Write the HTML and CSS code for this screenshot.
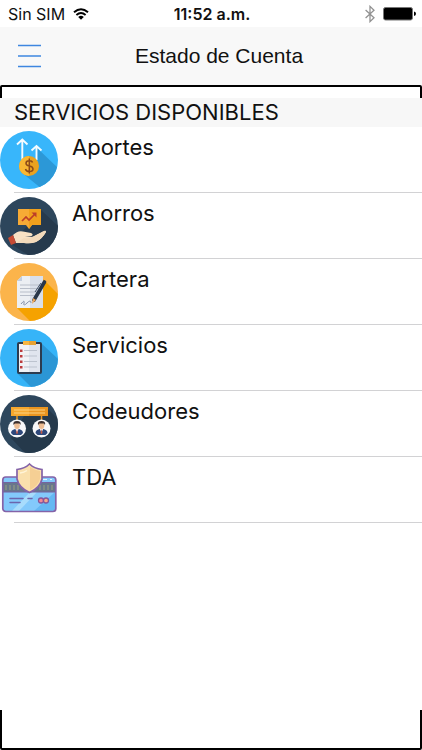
FILE: index.html
```html
<!DOCTYPE html>
<html lang="es">
<head>
<meta charset="utf-8">
<meta name="viewport" content="width=device-width, initial-scale=1">
<title>Estado de Cuenta</title>
<link rel="stylesheet" href="styles.css">
</head>
<body>
<div class="status">
  <div class="status-side">
    <span>Sin SIM</span>
    <svg class="wifi" viewBox="0 0 16 12" aria-hidden="true">
      <path d="M1 4.2Q8-1.8 15 4.2" fill="none" stroke="#000" stroke-width="2"/>
      <path d="M3.4 7Q8 3.2 12.6 7" fill="none" stroke="#000" stroke-width="1.9"/>
      <path d="M5.2 8.9Q8 6.6 10.8 8.9L8 11.8Z"/>
    </svg>
  </div>
  <span class="clock">11:52 a.m.</span>
  <div class="status-side status-right">
    <svg class="bluetooth" viewBox="0 0 10 18" aria-hidden="true"><path d="M.6 5L9 12.8L5 16.6V1.4L9 5.2L.6 13" fill="none" stroke="#929292" stroke-width="1.3"/></svg>
    <svg class="battery" viewBox="0 0 33 14" aria-hidden="true"><rect x=".5" y=".5" width="29" height="12.5" rx="2" fill="#000" stroke="#777"/><path d="M31 4.5q2 .5 2 2.3t-2 2.3z"/></svg>
  </div>
</div>
<header class="nav">
  <button class="menu" type="button" aria-label="Menú">
    <svg viewBox="0 0 23 24" aria-hidden="true"><path d="M0 1.5H23M0 12H23M0 22.5H23" stroke="#3e86e0" stroke-width="1.6"/></svg>
  </button>
  <h1>Estado de Cuenta</h1>
</header>
<main class="frame">
  <section class="sheet">
    <h2>SERVICIOS DISPONIBLES</h2>
    <ul>
      <li>
        <svg class="icon" viewBox="0 0 58 58" aria-hidden="true">
          <defs><clipPath id="disc"><circle cx="29" cy="29" r="29"/></clipPath></defs>
          <g clip-path="url(#disc)">
            <path fill="#38b6fb" d="M0 0H58V58H0Z"/>
            <path fill="#2c98d7" d="M36 16L58 37V58H42L21 41L38 34Z"/>
            <path d="M22.300 29V9M17 13.500L22.300 8.500L27.500 13.500M36.500 29V16M31.500 19.500L36.500 15L41.500 19.500" fill="none" stroke="#f4fbff" stroke-width="1.900"/>
            <circle cx="29" cy="35" r="10" fill="#eaa21f"/>
            <path d="M29 25a10 10 0 0 0 0 20z" fill="#f9b733"/>
            <path d="M32.500 31.500Q32 29.700 29.300 29.700Q26 29.700 26 32.200Q26 34.300 29.300 35Q33 35.700 33 38Q33 40.500 29.300 40.500Q26 40.500 25.500 38M29.300 27.500V42.500" fill="none" stroke="#8e4b18" stroke-width="1.500"/>
          </g>
        </svg>
        <a href="#aportes">Aportes</a>
      </li>
      <li>
        <svg class="icon" viewBox="0 0 58 58" aria-hidden="true">
          <g clip-path="url(#disc)">
            <path fill="#2d465c" d="M0 0H58V58H0Z"/>
            <path fill="#263a4d" d="M41 13L58 29V58H28L11 47L29 27Z"/>
            <path fill="#f7aa35" d="M18 12H41V28H32L29 32L26 28H18Z"/>
            <path fill="#f0a01c" d="M29 12H41V28H32L29 32Z"/>
            <path d="M22 24L26 20L29 23L35 17" fill="none" stroke="#bd3e28" stroke-width="1.700"/>
            <path d="M31.500 15.500H36.500V20.500Z" fill="#bd3e28"/>
            <path d="M13 38Q18 33 23 34.500L31 36Q34 37.500 31.500 39H25L33 40L43 34.500Q46 33 46 35Q42 42 36 45Q31 47 24 46H16Z" fill="#f8e1c4"/>
            <path d="M24 41Q29 42 34 39L43 34.500Q46 33 46 35Q42 42 36 45Q30 47 24 46H16Z" fill="#f3dabb"/>
            <path d="M8 41L13 38L16 46L11 48Z" fill="#c74b34"/>
          </g>
        </svg>
        <a href="#ahorros">Ahorros</a>
      </li>
      <li>
        <svg class="icon" viewBox="0 0 58 58" aria-hidden="true">
          <g clip-path="url(#disc)">
            <path fill="#fbb44b" d="M0 0H58V58H0Z"/>
            <path fill="#f5a200" d="M42 15L58 31V58H30L17 45L39 42Z"/>
            <path fill="#eceff3" d="M22 13H43V45H17V18Z"/>
            <path fill="#d9dfea" d="M30 13H43V45H30Z"/>
            <path fill="#c3cddd" d="M22 13V18H17Z"/>
            <path d="M20 22H40M20 25.500H40M20 29H38M20 32.500H35" stroke="#b8bec9" stroke-width="1"/>
            <path d="M21 41Q25 36 24 40T27 40T31 40" fill="none" stroke="#8793ab" stroke-width="1"/>
            <path d="M44.500 19L34 37" stroke="#28364a" stroke-width="3.600" stroke-linecap="round"/>
            <path d="M33 35L36 37L32 41Z" fill="#eba455"/>
            <path d="M35 29L41 20" stroke="#3b4b62" stroke-width="1"/>
          </g>
        </svg>
        <a href="#cartera">Cartera</a>
      </li>
      <li>
        <svg class="icon" viewBox="0 0 58 58" aria-hidden="true">
          <g clip-path="url(#disc)">
            <path fill="#36b4f8" d="M0 0H58V58H0Z"/>
            <path fill="#2b96d5" d="M41 14L58 30V58H31L17 44Z"/>
            <rect x="17" y="13" width="25" height="32" rx="2" fill="#2c3b4f"/>
            <path fill="#f0f2f6" d="M19 15H40V43H19Z"/>
            <path fill="#e0e5ee" d="M29 15H40V43H29Z"/>
            <path d="M24 21.500H37M24 27H37M24 32.500H37M24 38H37" stroke="#bcc3ce" stroke-width="1"/>
            <path d="M20 20.500h2.500v2.500H20zM20 26h2.500v2.500H20zM20 31.500h2.500v2.500H20zM20 37h2.500v2.500H20z" fill="#bb3b3d"/>
            <path fill="#f6b643" d="M23 12H36V16H23Z"/><path fill="#e8a333" d="M29 12H36V16H29Z"/>
          </g>
        </svg>
        <a href="#servicios">Servicios</a>
      </li>
      <li>
        <svg class="icon" viewBox="0 0 58 58" aria-hidden="true">
          <g clip-path="url(#disc)">
            <path fill="#2e475d" d="M0 0H58V58H0Z"/>
            <path fill="#25394b" d="M47 13L58 24V58H25L11 43L24 21H47Z"/>
            <path d="M17 21V25M41.500 21V25" stroke="#eb9a24" stroke-width="1.500"/>
            <path fill="#f6a72d" d="M11 12H48V21H11Z"/><path fill="#e9941f" d="M29 12H48V21H29Z"/>
            <path d="M14 15H45M14 18H45" stroke="#fbd283" stroke-width="1"/>
            <g id="person">
              <circle cx="17" cy="33.500" r="9" fill="#f7f8fa"/>
              <path d="M11 38Q11 35 15 34H19Q23 35 23 38L21 40H13Z" fill="#2e487b"/>
              <path d="M15 33H19L17 38Z" fill="#fff"/>
              <ellipse cx="17" cy="30.500" rx="2.800" ry="3.600" fill="#edbd94"/>
              <path d="M13.500 30Q12.500 26 17 26T20.500 30L19.500 28.500H15Z" fill="#3c302f"/>
              <path d="M17 34L18 38L17 39L16 38Z" fill="#c65b4a"/>
            </g>
            <use href="#person" x="24.500"/>
          </g>
        </svg>
        <a href="#codeudores">Codeudores</a>
      </li>
      <li>
        <svg class="icon" viewBox="0 0 58 58" aria-hidden="true">
          <rect x="2.800" y="16" width="53" height="34.500" rx="3" fill="#83c9fb"/>
          <path fill="#65b8f3" d="M34 50L55 31V47Q55 50 51 50Z"/>
          <path fill="#a8dcfc" d="M12 50L30 31H37L19 50Z"/>
          <path fill="#68768c" d="M3 21.500H55V31H3Z"/>
          <path d="M6 24v5M10 24v5M14 24v5M18 24v5M40 24v5M44 24v5M48 24v5M52 24v5" stroke="#929b83" stroke-width="1.200"/>
          <rect x="2.800" y="16" width="53" height="34.500" rx="3" fill="none" stroke="#8463a8" stroke-width="1.700"/>
          <path d="M3 21.500H55M3 31H55" stroke="#7563a0" stroke-width="1"/>
          <path d="M10 37.500H23M28 37.500H32M10 41.500H20" stroke="#6b65ad" stroke-width="1.500" stroke-linecap="round"/>
          <path d="M43 18.500H47M50 18.500H52" stroke="#e4f6ff" stroke-width="1.200"/>
          <circle cx="41" cy="39.500" r="2.500" fill="#f28797" stroke="#84569b" stroke-width="1.300"/><circle cx="46" cy="39.500" r="2.500" fill="#f4a78b" stroke="#84569b" stroke-width="1.300"/>
          <path d="M29.500 3Q34 7.500 42 8.500V18Q40 27 29.500 31.500Q19 27 17 18V8.500Q25 7.500 29.500 3Z" fill="#fae0ad" stroke="#8463a8" stroke-width="1.700"/>
          <path d="M30 6Q34 9 40 10V18Q38 25 30 29Z" fill="#f5cf94"/>
          <path d="M20 12Q24 11.500 27 9.500" fill="none" stroke="#fff4d8" stroke-width="1.500"/>
        </svg>
        <a href="#tda">TDA</a>
      </li>
    </ul>
  </section>
</main>
</body>
</html>
```
FILE: styles.css
```css
* {
  box-sizing: border-box;
}

body {
  margin: 0;
  min-height: 100vh;
  display: flex;
  flex-direction: column;
  background: #fff;
  color: #111;
  font-family: Inter, "Liberation Sans", sans-serif;
}

h1,
h2,
ul {
  margin: 0;
  padding: 0;
  font-weight: 400;
}

.status {
  display: grid;
  grid-template-columns: 1fr auto 1fr;
  align-items: center;
  height: 27px;
  padding: 0 6px 0 8px;
  font-size: 16px;
}

.status-side {
  display: flex;
  align-items: center;
  gap: 8px;
}

.status-right {
  justify-content: flex-end;
}

.clock {
  font-weight: 600;
}

.wifi {
  width: 16px;
  height: 12px;
}

.bluetooth {
  width: 10px;
  height: 18px;
}

.battery {
  width: 33px;
  height: 14px;
}

.nav {
  display: grid;
  grid-template-columns: 58px 1fr 42px;
  align-items: center;
  height: 58px;
  background: #f8f8f8;
}

.menu {
  display: flex;
  justify-content: center;
  padding: 0;
  border: 0;
  background: none;
}

.menu svg {
  width: 23px;
  height: 24px;
}

.nav h1 {
  text-align: center;
  font-family: "Liberation Sans", sans-serif;
  font-size: 21px;
  line-height: 28px;
}

.frame {
  flex: 1;
  display: flex;
  padding: 11px 0 38px;
  border: 2px solid #000;
  border-radius: 2px;
}

.sheet {
  flex: 1;
  margin: 0 -2px;
  background: #fff;
}

.sheet h2 {
  padding-left: 14px;
  background: #f7f7f7;
  font-size: 22px;
  line-height: 29px;
}

ul {
  list-style: none;
}

li {
  display: flex;
  gap: 14px;
  height: 66px;
  padding-top: 4px;
  background: linear-gradient(#d2d2d4, #d2d2d4) 14px 100% / 100% 1px no-repeat;
}

.icon {
  flex: none;
  width: 58px;
  height: 58px;
}

li a {
  flex: 1;
  color: inherit;
  font-size: 22px;
  line-height: 32px;
  text-decoration: none;
}
```
